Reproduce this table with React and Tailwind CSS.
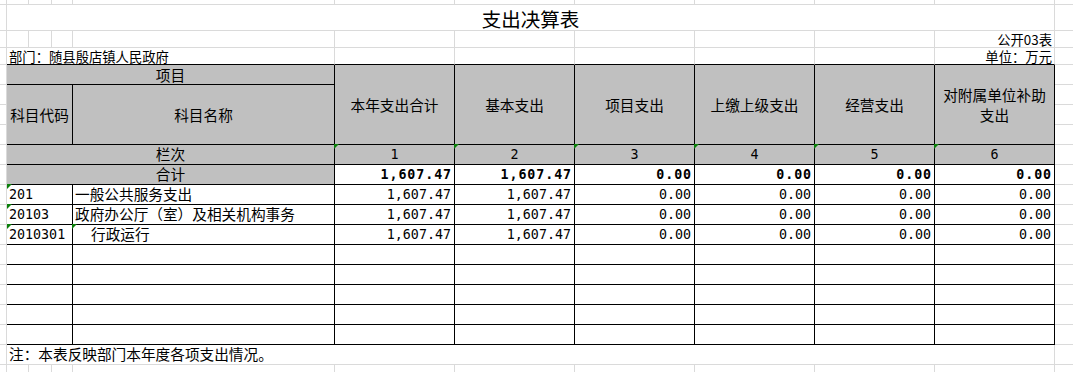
const LIGHT = 'border-[#dadada]';
const CN = "font-['Noto_Sans_CJK_SC',sans-serif]";
const NUM = "font-['DejaVu_Sans_Mono',monospace]";

const heads = ['本年支出合计', '基本支出', '项目支出', '上缴上级支出', '经营支出'];

const rows = [
  { code: '201', name: '一般公共服务支出', indent: false, nameMark: false },
  { code: '20103', name: '政府办公厅（室）及相关机构事务', indent: false, nameMark: false },
  { code: '2010301', name: '行政运行', indent: true, nameMark: true },
];

const values = ['1,607.47', '1,607.47', '0.00', '0.00', '0.00', '0.00'];

function Tri({ left = '-left-px' }) {
  return (
    <span
      className={`absolute -top-px ${left} z-10 h-0 w-0 border-t-[5px] border-r-[5px] border-t-[#0b7f0b] border-r-transparent`}
    />
  );
}

function Margin() {
  return <div className={`w-[7px] shrink-0 border-r border-b ${LIGHT}`} />;
}

function RightMargin() {
  return <div className={`flex-1 border-b ${LIGHT}`} />;
}

// the three narrow sheet columns that sit above the code column
function ASplit() {
  return (
    <div className="flex w-[66px] shrink-0">
      <div className={`w-[22px] border-r border-b ${LIGHT}`} />
      <div className={`w-[23px] border-r border-b ${LIGHT}`} />
      <div className={`w-[21px] border-r border-b ${LIGHT}`} />
    </div>
  );
}

function PlainSheetRow({ h }) {
  return (
    <div className={`flex ${h}`}>
      <Margin />
      <ASplit />
      <div className={`w-[262px] shrink-0 border-r border-b ${LIGHT}`} />
      {[0, 1, 2, 3, 4, 5].map((i) => (
        <div key={i} className={`w-[120px] shrink-0 border-r border-b ${LIGHT}`} />
      ))}
      <RightMargin />
    </div>
  );
}

function DataRow({ row }) {
  return (
    <div className="flex h-[20px]">
      <Margin />
      <div
        className={`relative flex w-[66px] shrink-0 items-center border-r border-b border-black pl-[2px] text-[13.33px] ${NUM}`}
      >
        {row && <Tri left="left-0" />}
        {row?.code}
      </div>
      <div
        className={`relative flex w-[262px] shrink-0 items-center border-r border-b border-black text-[14.67px] leading-none ${
          row?.indent ? 'pl-[18px]' : 'pl-[2px]'
        }`}
      >
        {row?.nameMark && <Tri />}
        {row?.name}
      </div>
      {values.map((v, i) => (
        <div
          key={i}
          className={`flex w-[120px] shrink-0 items-center justify-end border-r border-b border-black pr-[3px] text-[13.33px] ${NUM}`}
        >
          {row ? v : ''}
        </div>
      ))}
      <RightMargin />
    </div>
  );
}

export default function App() {
  return (
    <div className={`h-[372px] w-[1073px] overflow-hidden bg-white text-black ${CN}`}>
      <PlainSheetRow h="h-[5px]" />

      <div className="flex h-[26px]">
        <Margin />
        <div
          className={`flex w-[1048px] shrink-0 items-center justify-center border-r border-b pt-[3px] text-[19.5px] leading-none ${LIGHT}`}
        >
          支出决算表
        </div>
        <RightMargin />
      </div>

      <div className="flex h-[17px]">
        <Margin />
        <ASplit />
        <div className={`w-[262px] shrink-0 border-r border-b ${LIGHT}`} />
        {[0, 1, 2, 3, 4].map((i) => (
          <div key={i} className={`w-[120px] shrink-0 border-r border-b ${LIGHT}`} />
        ))}
        <div
          className={`flex w-[120px] shrink-0 items-end justify-end border-r border-b pr-[2px] text-[13.33px] leading-[15px] ${LIGHT}`}
        >
          公开03表
        </div>
        <RightMargin />
      </div>

      <div className="flex h-[17px]">
        <Margin />
        <div className="flex w-[328px] shrink-0 items-end border-r border-b border-r-[#dadada] border-b-black pl-[2px] text-[13.33px] leading-[15px]">
          部门：随县殷店镇人民政府
        </div>
        {[0, 1, 2, 3, 4].map((i) => (
          <div key={i} className="w-[120px] shrink-0 border-r border-b border-r-[#dadada] border-b-black" />
        ))}
        <div className="flex w-[120px] shrink-0 items-end justify-end border-r border-b border-r-[#dadada] border-b-black pr-[2px] text-[13.33px] leading-[15px]">
          单位：万元
        </div>
        <RightMargin />
      </div>

      {/* header block */}
      <div className="flex h-[80px] text-[14.67px] leading-[20px]">
        <div className="flex w-[7px] shrink-0 flex-col">
          {[0, 1, 2, 3].map((i) => (
            <div key={i} className={`h-[20px] border-r border-b ${LIGHT}`} />
          ))}
        </div>
        <div className="flex w-[328px] shrink-0 flex-col bg-[#c0c0c0]">
          <div className="flex h-[20px] items-center justify-center border-r border-b border-black">项目</div>
          <div className="flex h-[60px]">
            <div className="flex w-[66px] shrink-0 items-center justify-center border-r border-b border-black">
              科目代码
            </div>
            <div className="flex w-[262px] shrink-0 items-center justify-center border-r border-b border-black">
              科目名称
            </div>
          </div>
        </div>
        {heads.map((t) => (
          <div
            key={t}
            className="flex w-[120px] shrink-0 items-center justify-center border-r border-b border-black bg-[#c0c0c0]"
          >
            {t}
          </div>
        ))}
        <div className="flex w-[120px] shrink-0 items-center justify-center border-r border-b border-black bg-[#c0c0c0] text-center">
          对附属单位补助
          <br />
          支出
        </div>
        <div className="flex flex-1 flex-col">
          {[0, 1, 2, 3].map((i) => (
            <div key={i} className={`h-[20px] border-b ${LIGHT}`} />
          ))}
        </div>
      </div>

      <div className="flex h-[20px]">
        <Margin />
        <div className="flex w-[328px] shrink-0 items-center justify-center border-r border-b border-black bg-[#c0c0c0] text-[14.67px] leading-none">
          栏次
        </div>
        {[1, 2, 3, 4, 5, 6].map((n) => (
          <div
            key={n}
            className={`relative flex w-[120px] shrink-0 items-center justify-center border-r border-b border-black bg-[#c0c0c0] pt-px text-[13.33px] ${NUM}`}
          >
            <Tri />
            {n}
          </div>
        ))}
        <RightMargin />
      </div>

      <div className="flex h-[20px]">
        <Margin />
        <div className="flex w-[328px] shrink-0 items-center justify-center border-r border-b border-black bg-[#c0c0c0] text-[14.67px] leading-none">
          合计
        </div>
        {values.map((v, i) => (
          <div
            key={i}
            className={`flex w-[120px] shrink-0 items-center justify-end border-r border-b border-black pr-[2px] text-[13.33px] font-bold tracking-[0.9px] ${NUM}`}
          >
            {v}
          </div>
        ))}
        <RightMargin />
      </div>

      {rows.map((r) => (
        <DataRow key={r.code} row={r} />
      ))}
      {[0, 1, 2, 3, 4].map((i) => (
        <DataRow key={`e${i}`} />
      ))}

      <div className="flex h-[20px]">
        <Margin />
        <div
          className={`flex w-[1048px] shrink-0 items-center border-r border-b pl-[2px] text-[14.67px] leading-none ${LIGHT}`}
        >
          注：本表反映部门本年度各项支出情况。
        </div>
        <RightMargin />
      </div>

      <PlainSheetRow h="h-[10px]" />
    </div>
  );
}
